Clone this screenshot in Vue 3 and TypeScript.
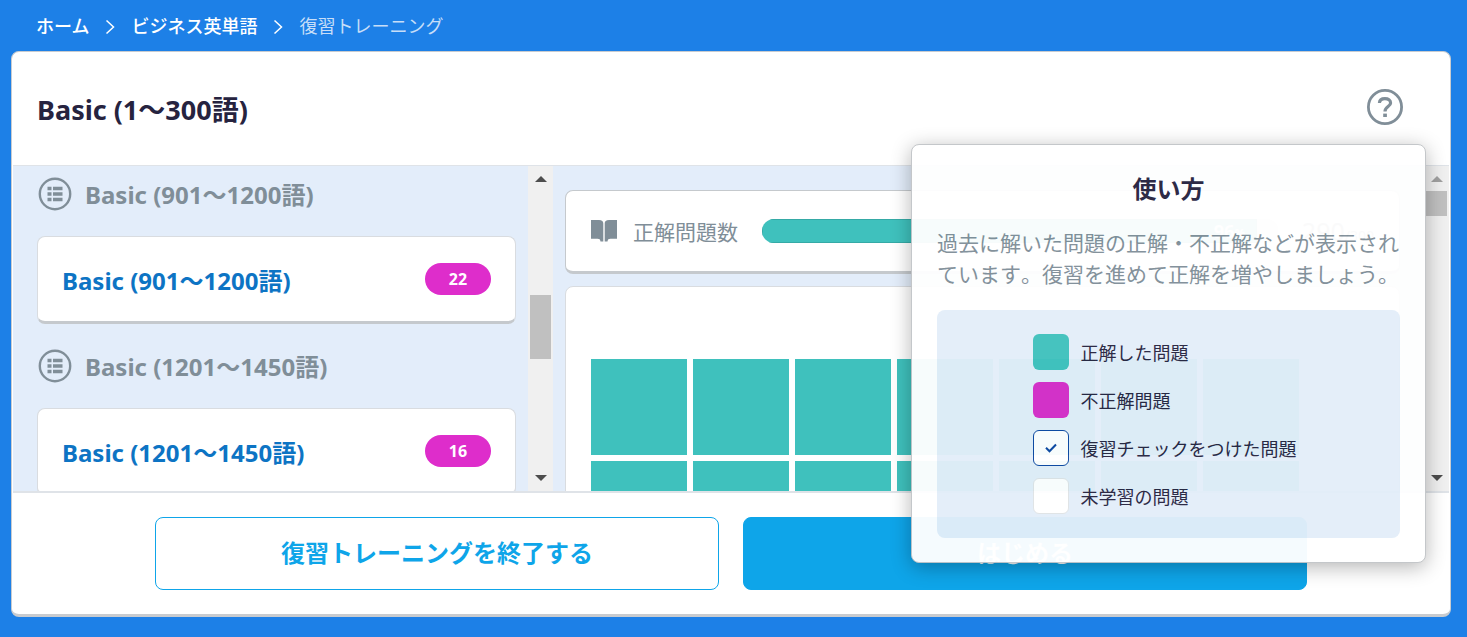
<script setup lang="ts">
interface Unit { id: number; name: string; wrong: number }
interface Legend { kind: string; label: string }

const units: Unit[] = [
  { id: 4, name: 'Basic (901〜1200語)', wrong: 22 },
  { id: 5, name: 'Basic (1201〜1450語)', wrong: 16 },
]
const legends: Legend[] = [
  { kind: 'correct', label: '正解した問題' },
  { kind: 'wrong', label: '不正解問題' },
  { kind: 'checked', label: '復習チェックをつけた問題' },
  { kind: 'none', label: '未学習の問題' },
]
const correct = 290
const total = 300
const percent = Math.floor((correct / total) * 100)
const tiles = 14
</script>

<template>
  <div class="page">
    <nav class="crumbs" aria-label="パンくず">
      <a href="#">ホーム</a>
      <svg class="chev" viewBox="0 0 10 16"><path d="M1.5 1.5 8.5 8 1.5 14.5" /></svg>
      <a href="#">ビジネス英単語</a>
      <svg class="chev" viewBox="0 0 10 16"><path d="M1.5 1.5 8.5 8 1.5 14.5" /></svg>
      <span class="current">復習トレーニング</span>
    </nav>

    <main class="card">
      <header class="head">
        <h1>Basic (1〜300語)</h1>
        <div class="help">
          <button class="help-btn" type="button" aria-label="使い方">
            <svg viewBox="0 0 36 36">
              <circle cx="18" cy="18" r="16.6" fill="none" stroke="#808e98" stroke-width="2.8" />
              <path d="M12.4 14C12.6 11 14.700 9.600 17.900 9.600C21.300 9.600 23.600 11.300 23.600 13.900C23.600 17.600 18 17.600 18 22.400" fill="none" stroke="#808e98" stroke-width="3.200" />
              <rect x="16.200" y="24.600" width="3.700" height="3.400" fill="#808e98" />
            </svg>
          </button>
          <section class="popup">
            <h2>使い方</h2>
            <p>過去に解いた問題の正解・不正解などが表示されています。復習を進めて正解を増やしましょう。</p>
            <div class="legend-box">
              <ul class="legend">
                <li v-for="l in legends" :key="l.kind">
                  <span class="swatch" :class="l.kind">
                    <svg v-if="l.kind === 'checked'" viewBox="0 0 12 10"><path d="M1 4.800 4.500 8.300 11 1.500" /></svg>
                  </span>
                  {{ l.label }}
                </li>
              </ul>
            </div>
          </section>
        </div>
      </header>

      <div class="body">
        <div class="pane left">
          <section v-for="u in units" :key="u.id" class="unit">
            <h2 class="unit-head">
              <svg viewBox="0 0 34 34">
                <circle cx="17" cy="17" r="15.200" fill="none" stroke="#808e98" stroke-width="2.400" />
                <path d="M9.500 9.700h4v3.600h-4zM15 9.700h9.500v3.600H15zM9.500 15.200h4v3.600h-4zM15 15.200h9.500v3.600H15zM9.500 20.700h4v3.600h-4zM15 20.700h9.500v3.600H15z" fill="#808e98" />
              </svg>
              <span>{{ u.name }}</span>
            </h2>
            <a href="#" class="unit-card">
              <span>{{ u.name }}</span>
              <span class="badge">{{ u.wrong }}</span>
            </a>
          </section>
        </div>
        <div class="bar" aria-hidden="true">
          <i class="up"></i><i class="thumb mid"></i><i class="down"></i>
        </div>
        <div class="pane right">
          <section class="score">
            <svg class="book" viewBox="0 0 26 22">
              <path d="M0 0H8C11 0 12.300 1.200 12.300 3.500V21.500H9.500C9.200 19.500 8.500 18.800 6.500 18.800H0ZM26 0H18C15 0 13.700 1.200 13.700 3.500V21.500H16.500C16.800 19.500 17.500 18.800 19.500 18.800H26Z" fill="#808e98" />
            </svg>
            <span class="score-label">正解問題数</span>
            <div class="track"><div class="fill" :style="{ width: percent + '%' }">{{ percent }}<small>%</small></div></div>
            <span class="count">{{ correct }}<small>/{{ total }}</small></span>
          </section>
          <section class="tiles">
            <div v-for="n in tiles" :key="n" class="tile"></div>
          </section>
        </div>
        <div class="bar" aria-hidden="true">
          <i class="up off"></i><i class="thumb top"></i><i class="down"></i>
        </div>
      </div>

      <footer class="foot">
        <button type="button" class="btn outline">復習トレーニングを終了する</button>
        <button type="button" class="btn solid">はじめる</button>
      </footer>
    </main>
  </div>
</template>

<style>
body { background: #1d80e7; }
</style>

<style scoped>
* { box-sizing: border-box; margin: 0; padding: 0; }
.page {
  font-family: "Noto Sans", "Noto Sans CJK JP", sans-serif;
  color: #26233f;
  padding: 0 16px 20px 11px;
  background: #1d80e7;
}
.crumbs {
  display: flex;
  align-items: center;
  height: 51px;
  padding: 0 0 1px 25px;
  font-size: 18px;
  font-weight: 500;
}
.crumbs a { color: #fff; text-decoration: none; font-family: "Noto Sans CJK JP", sans-serif; }
.current { color: #c7def8; font-family: "Noto Sans CJK JP", sans-serif; font-weight: 400; }
.chev { width: 10px; height: 16px; margin: 3px 16px 0; fill: none; stroke: #fff; stroke-width: 1.5; }
.card {
  background: #fff;
  border: 1px solid #c8cbcf;
  border-bottom-width: 3px;
  border-radius: 8px;
  padding: 0 1px;
}
.head {
  display: flex;
  align-items: center;
  justify-content: space-between;
  height: 113px;
  padding: 0 46px 4px 24px;
}
h1 { font-size: 27px; line-height: 36px; font-weight: 700; padding-top: 6px; }
.help { position: relative; }
.help-btn { display: block; width: 36px; height: 36px; border: 0; background: none; }
.help-btn svg { display: block; width: 36px; height: 36px; }
.popup {
  position: absolute;
  z-index: 2;
  top: 55px;
  right: -23px;
  width: 515px;
  padding: 24px 25px;
  background: #fff;
  border: 1px solid #c2c5c8;
  border-radius: 8px;
  box-shadow: 0 4px 20px rgba(0, 0, 0, 0.3);
  opacity: 0.96;
}
.popup h2 { font-size: 24px; line-height: 40px; text-align: center; }
.popup p { font-size: 21px; line-height: 31px; color: #808e98; margin: 19px 0 20px; font-kerning: none; }
.legend-box { display: flex; justify-content: center; background: #e3eef9; border-radius: 8px; padding: 24px 8px 24px 0; }
.legend { display: grid; gap: 12px; list-style: none; font-size: 18px; }
.legend li { display: flex; align-items: center; gap: 12px; height: 36px; }
.swatch { display: grid; place-items: center; width: 36px; height: 36px; border-radius: 6px; }
.correct { background: #3fc1bd; }
.wrong { background: #d92dc9; }
.checked { background: #fff; border: 1px solid #0d47a1; }
.checked svg { width: 12px; height: 10px; fill: none; stroke: #0d47a1; stroke-width: 2; }
.none { background: #fff; border: 1px solid #dfe3e6; }
.body {
  display: flex;
  height: 328px;
  background: #e3edfa;
  border-top: 1px solid #dfe3e8;
  border-bottom: 2px solid #dfe3e8;
}
.pane { overflow: hidden; }
.left { flex: 0 0 515px; padding: 11px 12px 0 24px; }
.unit { height: 172px; }
.unit-head { display: flex; align-items: center; gap: 13px; height: 34px; padding-left: 1px; color: #808e98; font-size: 24px; line-height: 34px; }
.unit-head svg { width: 34px; height: 34px; }
.unit-head span { padding-top: 2px; }
.unit-card {
  display: flex;
  align-items: center;
  justify-content: space-between;
  height: 88px;
  margin-top: 25px;
  padding: 0 24px;
  background: #fff;
  border: 1px solid #d9dce0;
  border-bottom: 3px solid #c5c9cd;
  border-radius: 8px;
  color: #0d74c4;
  font-size: 24px;
  font-weight: 700;
  text-decoration: none;
}
.badge {
  width: 66px;
  height: 32px;
  border-radius: 16px;
  background: #de2dcb;
  color: #fff;
  font-size: 16px;
  line-height: 32px;
  text-align: center;
}
.bar {
  display: flex;
  flex-direction: column;
  align-items: center;
  flex: 0 0 25px;
  background: #f0f0f0;
  padding: 10px 0;
}
.up, .down { border: 6px solid transparent; border-top-width: 0; border-bottom: 6px solid #4d4d4d; }
.down { border-top: 6px solid #4d4d4d; border-bottom-width: 0; margin-top: auto; }
.off { border-bottom-color: #a0a0a0; }
.thumb { width: 21px; background: #c0c0c0; }
.mid { height: 64px; margin-top: 113px; }
.top { height: 25px; margin-top: 9px; }
.right { flex: 1; padding: 24px 24px 0 12px; }
.score {
  display: flex;
  align-items: center;
  height: 84px;
  padding: 0 25px;
  background: #fff;
  border: 1px solid #c5c9cd;
  border-bottom-width: 3px;
  border-radius: 8px;
}
.book { width: 26px; height: 22px; }
.score-label { margin: 0 24px 0 16px; font-size: 21px; color: #808e98; white-space: nowrap; }
.track { flex: 1; height: 24px; border-radius: 12px; background: #f4f5f6; overflow: hidden; }
.fill {
  height: 24px;
  padding-right: 12px;
  background: #3fc1bd;
  box-shadow: inset 0 0 0 1px #35aaa6;
  color: #fff;
  font-size: 18px;
  font-weight: 700;
  line-height: 24px;
  text-align: right;
}
.fill small { font-size: 12px; }
.count { margin-left: 24px; font-size: 25px; color: #808e98; white-space: nowrap; }
.count small { font-size: 14px; }
.tiles {
  display: flex;
  flex-wrap: wrap;
  gap: 6px;
  margin-top: 12px;
  padding: 72px 25px 24px;
  background: #fff;
  border: 1px solid #d9dce0;
  border-radius: 8px;
}
.tile { width: 96px; height: 96px; background: #3fc1bd; }
.foot { display: flex; gap: 24px; justify-content: center; padding: 24px 12px; }
.btn {
  flex: 0 1 564px;
  height: 73px;
  padding-bottom: 4px;
  border: 1px solid #0ea5e9;
  border-radius: 8px;
  font-family: inherit;
  font-size: 24px;
  font-weight: 700;
}
.outline { background: #fff; color: #0ea5e9; }
.solid { background: #0ea5e9; color: #fff; }
</style>
